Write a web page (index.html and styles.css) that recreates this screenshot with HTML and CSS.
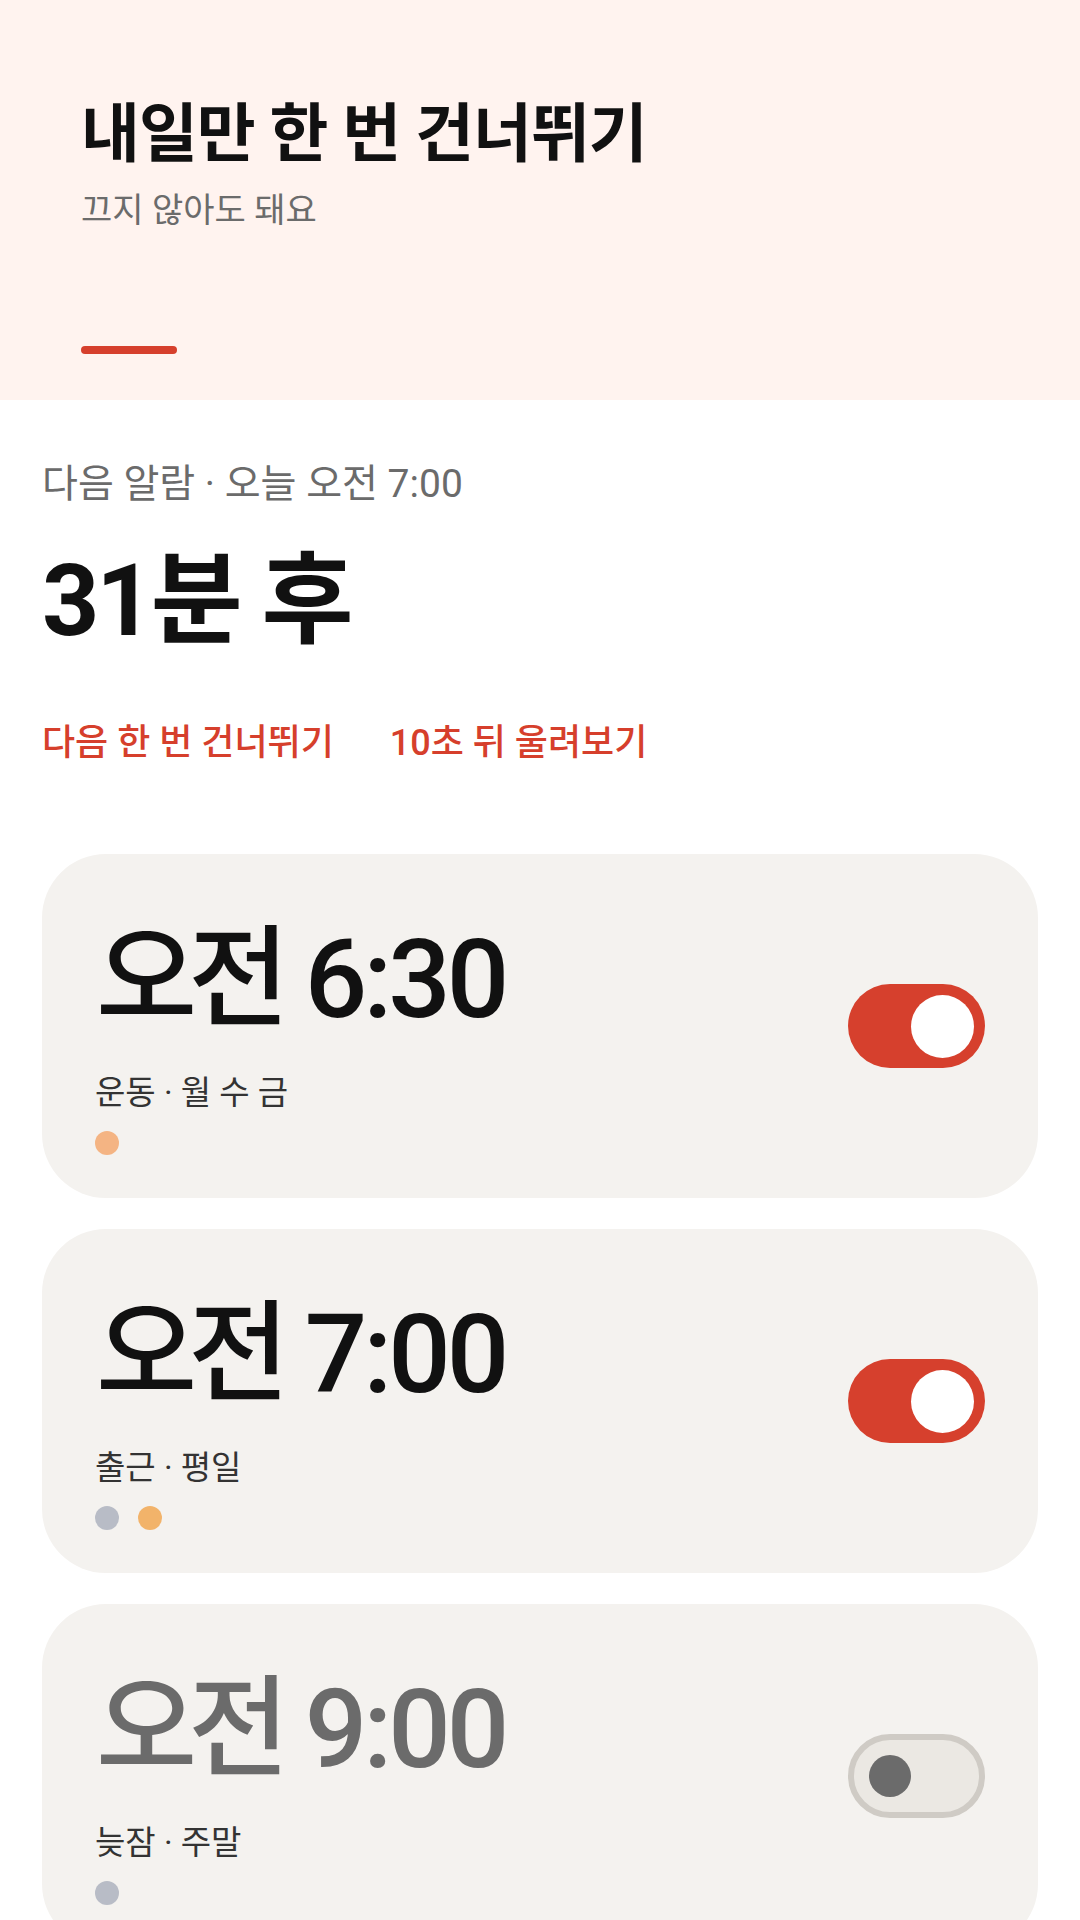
FILE: index.html
```html
<!DOCTYPE html>
<html lang="ko">
<head>
    <meta charset="UTF-8">
    <meta name="viewport" content="width=device-width, initial-scale=1.0">
    <title>알람</title>
    <link rel="stylesheet" href="styles.css">
</head>
<body>

    <!-- Header -->
    <header class="hero">
        <h1 class="hero-title">내일만 한 번 건너뛰기</h1>
        <p class="hero-sub">끄지 않아도 돼요</p>
        <div class="hero-bar"></div>
    </header>

    <main class="content">
        <!-- Next alarm -->
        <section class="next">
            <p class="next-label">다음 알람 · 오늘 오전 7:00</p>
            <h2 class="next-time">31분 후</h2>
            <div class="next-actions">
                <a href="#">다음 한 번 건너뛰기</a>
                <a href="#">10초 뒤 울려보기</a>
            </div>
        </section>

        <!-- Alarm cards -->
        <section class="alarms">
            <div class="alarm">
                <div class="alarm-info">
                    <div class="alarm-time"><span class="ampm">오전</span> 6:30</div>
                    <div class="alarm-label">운동 · 월 수 금</div>
                    <div class="alarm-dots">
                        <span class="dot dot-peach"></span>
                    </div>
                </div>
                <div class="toggle on"><span class="knob"></span></div>
            </div>

            <div class="alarm">
                <div class="alarm-info">
                    <div class="alarm-time"><span class="ampm">오전</span> 7:00</div>
                    <div class="alarm-label">출근 · 평일</div>
                    <div class="alarm-dots">
                        <span class="dot dot-gray"></span>
                        <span class="dot dot-orange"></span>
                    </div>
                </div>
                <div class="toggle on"><span class="knob"></span></div>
            </div>

            <div class="alarm off">
                <div class="alarm-info">
                    <div class="alarm-time"><span class="ampm">오전</span> 9:00</div>
                    <div class="alarm-label">늦잠 · 주말</div>
                    <div class="alarm-dots">
                        <span class="dot dot-gray"></span>
                    </div>
                </div>
                <div class="toggle"><span class="knob"></span></div>
            </div>
        </section>
    </main>

</body>
</html>
```

FILE: styles.css
```css
/* General Styles */
* {
    margin: 0;
    padding: 0;
    box-sizing: border-box;
}
body {
    background: #fff;
    color: #111;
    font-family: Roboto, "Noto Sans CJK KR", sans-serif;
}

/* Header */
.hero {
    background: #fff3ef;
    height: 400px;
    padding: 97px 81px 0;
}
.hero-title {
    font-size: 64px;
    line-height: 76px;
    font-weight: 700;
    letter-spacing: -1px;
}
.hero-sub {
    margin-top: 17px;
    font-size: 34px;
    line-height: 40px;
    color: #6b6b6b;
}
.hero-bar {
    margin-top: 116px;
    width: 96px;
    height: 8px;
    border-radius: 4px;
    background: #d63f2c;
}

/* Next alarm */
.content {
    padding: 0 42px;
}
.next-label {
    margin-top: 62px;
    font-size: 39px;
    line-height: 44px;
    color: #6b6b6b;
}
.next-time {
    margin-top: 40px;
    font-size: 100px;
    line-height: 110px;
    font-weight: 700;
    letter-spacing: -3px;
}
.next-actions {
    margin-top: 66px;
    display: flex;
    gap: 56px;
}
.next-actions a {
    font-size: 36px;
    line-height: 42px;
    font-weight: 500;
    color: #d63f2c;
    text-decoration: none;
}

/* Alarm cards */
.alarms {
    margin-top: 90px;
    display: flex;
    flex-direction: column;
    gap: 31px;
}
.alarm {
    background: #f4f2ef;
    border-radius: 64px;
    padding: 66px 53px 43px 54px;
    display: flex;
    align-items: center;
    justify-content: space-between;
}
.alarm-time {
    font-size: 110px;
    line-height: 120px;
    font-weight: 500;
    letter-spacing: -4px;
    color: #111;
}
.alarm-time .ampm {
    letter-spacing: -9px;
    margin-right: 1px;
}
.alarm.off .alarm-time {
    color: #6b6b6b;
}
.alarm-label {
    margin-top: 34px;
    margin-left: -1px;
    font-size: 33px;
    line-height: 38px;
    color: #333;
}
.alarm-dots {
    margin-top: 19px;
    margin-left: -1px;
    display: flex;
    gap: 19px;
}
.dot {
    width: 24px;
    height: 24px;
    border-radius: 50%;
}
.dot-peach { background: #f4b483; }
.dot-orange { background: #f2b36a; }
.dot-gray { background: #b8bcc6; }

/* Toggle */
.toggle {
    margin-top: -23px;
    width: 137px;
    height: 84px;
    border-radius: 42px;
    border: 6px solid #cfcbc5;
    background: #ebe8e3;
    display: flex;
    align-items: center;
    padding-left: 15px;
}
.toggle .knob {
    width: 42px;
    height: 42px;
    border-radius: 50%;
    background: #6b6b6b;
}
.toggle.on {
    border: none;
    background: #d6402d;
    justify-content: flex-end;
    padding: 0 11px 0 0;
}
.toggle.on .knob {
    width: 63px;
    height: 63px;
    background: #fff;
}
```
